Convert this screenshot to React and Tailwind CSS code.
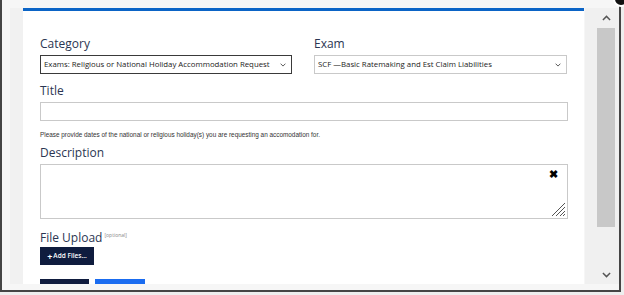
import React from "react";

const Chevron = ({ up, className }) => (
  <svg viewBox="0 0 10 6" className={className} fill="none" stroke="currentColor" strokeWidth="1.6">
    {up ? <path d="M1 5.2 5 1.2 9 5.2" /> : <path d="M1 0.8 5 4.8 9 0.8" />}
  </svg>
);

const Label = ({ children, className = "" }) => (
  <div className={"text-[12px] leading-[16px] text-[#2b3652] " + className}>{children}</div>
);

const Select = ({ value, focused }) => (
  <div
    className={
      "h-[19px] flex items-center justify-between pl-[3px] pr-[5px] bg-white " +
      (focused ? "border-[1.5px] border-[#3a3a3a]" : "border border-[#c9c9c9]")
    }
  >
    <span className="text-[7.8px] text-[#222] whitespace-nowrap">{value}</span>
    <Chevron className="w-[6px] h-[4px] text-[#555]" />
  </div>
);

export default function App() {
  return (
    <div
      className="relative w-[624px] h-[295px] bg-[#eeeeee] overflow-hidden"
      style={{ fontFamily: '"Open Sans", "Noto Sans", sans-serif' }}
    >
      <div className="w-[621px] h-[292px] border-x-2 border-b-2 border-[#454545] bg-[#f6f6f6] flex pt-2 pb-[6px]">
        {/* left gutter */}
        <div className="w-[21px] flex">
          <div className="ml-[8px] w-[13px] bg-[#f1f1f1]" />
        </div>

        {/* panel */}
        <div className="w-[561px] bg-white border-t-[3px] border-[#0b64c6] pl-[17px] pr-[16px] overflow-hidden">
          <div className="grid grid-cols-[252px_253px] gap-x-[22px] mt-[25px]">
            <div>
              <Label>Category</Label>
              <div className="mt-[3px]">
                <Select focused value="Exams: Religious or National Holiday Accommodation Request" />
              </div>
            </div>
            <div>
              <Label>Exam</Label>
              <div className="mt-[3px]">
                <Select value="SCF —Basic Ratemaking and Est Claim Liabilities" />
              </div>
            </div>
          </div>

          <Label className="mt-[9px]">Title</Label>
          <div className="mt-[3px] h-[19px] border border-[#c9c9c9]" />

          <div
            className="mt-[10px] text-[6.4px] leading-[8px] text-[#333]"
            style={{ fontFamily: '"Liberation Sans", Arial, sans-serif' }}
          >
            Please provide dates of the national or religious holiday(s) you are requesting an accomodation for.
          </div>

          <Label className="mt-[6px]">Description</Label>
          <div className="relative mt-[3px] h-[55px] border border-[#c9c9c9]">
            <span className="absolute right-[9px] top-[3px] text-[11px] leading-none font-bold text-black">✖</span>
            <svg viewBox="0 0 16 16" className="absolute right-[2px] bottom-[2px] w-[16px] h-[16px]" stroke="#555" strokeWidth="1">
              <path d="M3 16 16 3M7 16 16 7M11 16 16 11M14 16 16 14" />
            </svg>
          </div>

          <div className="mt-[11px] flex items-start">
            <Label>File Upload</Label>
            <span className="ml-[2px] text-[5px] leading-[10px] text-[#888]">[optional]</span>
          </div>
          <div className="mt-[1px] w-[54px] h-[18px] bg-[#0f1c3e] flex items-center justify-center text-white text-[6.5px] font-semibold">
            <span className="text-[9px] leading-none font-bold mr-[1px]">+</span>Add Files...
          </div>

          <div className="mt-[14px] flex gap-[6px]">
            <div className="w-[49px] h-[20px] bg-[#0f1c3e]" />
            <div className="w-[50px] h-[20px] bg-[#1a6cf0]" />
          </div>
        </div>

        {/* scrollbar */}
        <div className="w-[35px] flex">
          <div className="ml-[1px] w-[34px] bg-[#f0f0f0] flex flex-col items-center">
            <div className="h-[20px] flex items-center ml-[8px]">
              <Chevron up className="w-[9px] h-[6px] text-[#555]" />
            </div>
            <div className="ml-[8px] w-[18px] h-[199px] bg-[#c8c8c8]" />
            <div className="flex-1" />
            <div className="h-[18px] flex items-center ml-[8px]">
              <Chevron className="w-[9px] h-[6px] text-[#555]" />
            </div>
          </div>
        </div>
      </div>

      {/* close button peeking in top-right corner */}
      <div className="absolute left-[613px] top-[-9px] w-[16px] h-[16px] rounded-full bg-[#111] border-2 border-white" />
    </div>
  );
}
